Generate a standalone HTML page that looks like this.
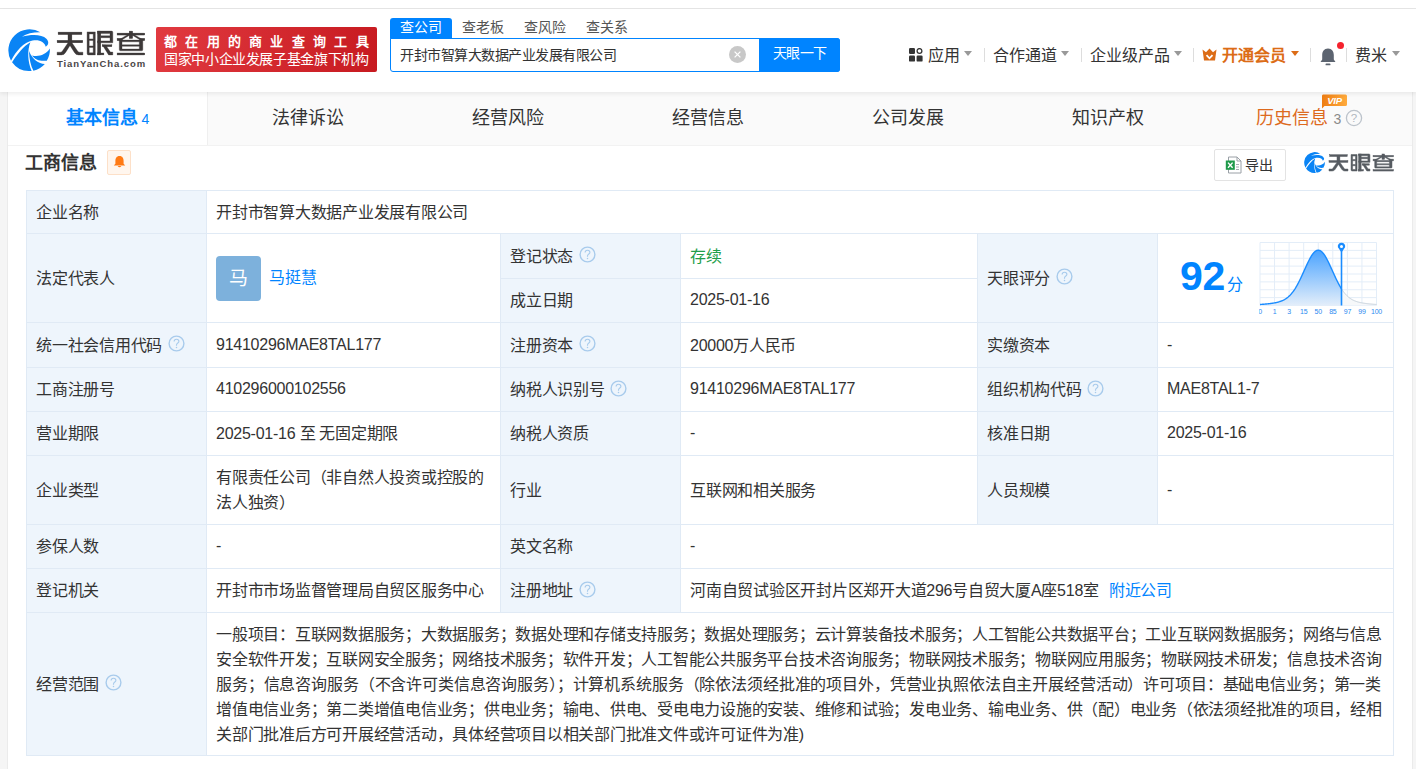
<!DOCTYPE html>
<html lang="zh-CN"><head><meta charset="utf-8">
<style>
*{box-sizing:border-box;margin:0;padding:0}
html,body{width:1416px;height:769px;overflow:hidden;background:#f5f5f5;font-family:"Liberation Sans",sans-serif;color:#333;position:relative}
.abs{position:absolute;white-space:nowrap}
#top{position:absolute;left:0;top:0;width:1416px;height:8px;background:#fff}
#topline{position:absolute;left:0;top:8px;width:1416px;height:1px;background:#e6e6e6}
#header{position:absolute;left:0;top:9px;width:1416px;height:83px;background:#fff;box-shadow:0 2px 4px rgba(0,0,0,.07);z-index:5}
#hdr{position:absolute;left:0;top:9px;width:1416px;height:83px;z-index:6}
#card{position:absolute;left:8px;top:92px;width:1404px;height:677px;background:#fff}
.nav{top:37px;font-size:16px;line-height:20px;color:#333}
.caret{top:42px;width:0;height:0;border-left:4.5px solid transparent;border-right:4.5px solid transparent;border-top:5px solid #999}
.sep{top:39px;width:1px;height:14px;background:#ddd}
.tabs{position:absolute;left:8px;top:92px;width:1404px;height:54px;background:#fafafa;border-bottom:1px solid #f2f2f2}
.tab{position:absolute;top:0;height:53px;line-height:52px;font-size:18px;color:#333;text-align:center;width:200px}
.tab.active{background:#fff;color:#0084ff;font-weight:bold}
.cell{position:absolute;border:1px solid #e0eaf5;font-size:16px;color:#333;display:flex;align-items:center;padding-left:9px;padding-bottom:3px}
.lab{background:#eef5fc}
.q{display:inline-block;width:16px;height:16px;border:1.2px solid #a9c5e3;border-radius:50%;color:#9dbbdc;font-size:11px;font-weight:bold;line-height:14px;letter-spacing:0;text-align:center;margin-left:6px;vertical-align:middle}
.cell{font-size:16px;letter-spacing:-0.25px}
.link{color:#0084ff;margin-left:10px}
.wrap{line-height:25px;white-space:normal;position:relative;top:1.5px}
.scope{line-height:25px;width:1165px;position:relative;top:1.5px}
.sl{text-align:justify;text-align-last:justify;white-space:nowrap}
.sl.last{text-align-last:left}
.qi{margin-left:5.5px;flex:none;position:relative;top:0}
.cell.lat{padding-bottom:1px}
</style></head><body>
<div id="top"></div><div id="topline"></div>
<div id="header"></div>
<div id="card"></div><div style="position:absolute;left:7px;top:92px;width:1px;height:677px;background:#ebebeb"></div><div style="position:absolute;left:1412px;top:92px;width:1px;height:677px;background:#ebebeb"></div>

<div id="hdr">
  <svg class="abs" style="left:4px;top:16px" width="50" height="50" viewBox="0 0 769 769">
    <g fill="#0a84f5"><path d="M108,548 A325,325 0 0 1 560,112 C450,110 350,132 275,180 C420,140 585,140 652,212 C692,255 690,302 642,334 C622,262 545,222 440,240 C300,265 190,400 108,548 Z"/>
<path d="M124,572 C212,440 300,325 406,264 C358,385 362,560 425,706 A325,325 0 0 1 124,572 Z"/>
<path d="M384,398 C388,522 412,625 452,703 A325,325 0 0 0 628,598 C530,590 445,540 384,398 Z"/>
<path d="M432,468 C525,492 645,462 706,362 A325,325 0 0 1 658,548 C560,562 472,532 432,468 Z"/></g>
  </svg>
  <svg class="abs" style="left:0;top:-9px" width="150" height="60" viewBox="0 0 150 60"><g fill="#3c3838" stroke="#3c3838" stroke-width="0.35">
<rect x="58.1" y="32.1" width="23.8" height="2.5"/>
<rect x="57.1" y="40.3" width="25.7" height="2.5"/>
<rect x="68" y="34" width="3.9" height="7"/>
<path d="M68.2,42.5 L71.9,42.5 L65.6,52.4 Q64.2,54.9 61.5,54.9 L57.1,54.9 L57.1,52.2 L60.5,52.2 Q61.6,52.2 62.4,51 Z"/>
<path d="M71.8,42.5 L68.1,42.5 L74.4,52.4 Q75.8,54.9 78.5,54.9 L82.9,54.9 L82.9,52.2 L79.5,52.2 Q78.4,52.2 77.6,51 Z"/>
<path fill-rule="evenodd" d="M87.1,31.9 H95.3 V54.9 H88.6 Q87.1,54.9 87.1,53.4 Z M89.2,34 V38.9 H93.2 V34 Z M89.2,40.5 V45.9 H93.2 V40.5 Z M89.2,47.5 V52.8 H93.2 V47.5 Z"/>
<rect x="97.5" y="31.1" width="3.3" height="23.8"/>
<path d="M97.5,31.1 H111.5 Q112.8,31.1 112.8,32.4 V42.8 H97.5 V40.9 H110 V37.7 H100.8 V35.8 H110 V33.6 H97.5 Z"/>
<rect x="102.3" y="44.8" width="9.6" height="1.9"/>
<path d="M102.4,45 L105.6,45 L110.4,52.1 L112.8,52.1 L112.8,54.9 L108.6,54.9 Z"/>
<rect x="97.5" y="53" width="6.4" height="1.9"/>
<rect x="117.1" y="33.1" width="27.7" height="1.95"/>
<rect x="129.2" y="31.1" width="3.5" height="7.4"/>
<path d="M129.6,33.6 L132.3,33.6 L122.6,39.4 L119.6,39.4 Z"/>
<path d="M129.6,33.6 L132.3,33.6 L142.3,39.4 L139.3,39.4 Z"/>
<rect x="117.1" y="38.3" width="5.2" height="2.4"/>
<rect x="139.6" y="38.3" width="5.2" height="2.4"/>
<path fill-rule="evenodd" d="M119.3,40.1 H142.8 V49.6 Q142.8,50.8 141.6,50.8 H120.5 Q119.3,50.8 119.3,49.6 Z M122,41.8 V44.8 H139.3 V41.8 Z M122,46.3 V49.1 H139.3 V46.3 Z"/>
<rect x="117.1" y="53" width="27.7" height="1.95"/>
</g></svg>
  <div class="abs" style="left:57px;top:49px;font-size:9.5px;font-weight:bold;color:#4a4646;letter-spacing:0.9px;line-height:12px">TianYanCha.com</div>
  <div class="abs" style="left:156px;top:18px;width:221px;height:45px;border-radius:2px;background:linear-gradient(100deg,#e13a40,#c71a20)">
    <div class="abs" style="left:8px;top:6.5px;font-size:13px;font-weight:bold;color:#fff;letter-spacing:8.3px;line-height:16px;white-space:nowrap">都在用的商业查询工具</div>
    <div class="abs" style="left:8px;top:23.5px;font-size:14px;letter-spacing:-0.36px;color:#fff;line-height:16px;white-space:nowrap;font-weight:500">国家中小企业发展子基金旗下机构</div>
  </div>
  <div class="abs" style="left:390px;top:9px;width:62px;height:21px;background:#0084ff;border-radius:3px 3px 0 0;color:#fff;font-size:14px;line-height:19px;text-align:center">查公司</div>
  <div class="abs" style="left:462px;top:9px;font-size:14px;line-height:19px;color:#555">查老板</div>
  <div class="abs" style="left:524px;top:9px;font-size:14px;line-height:19px;color:#555">查风险</div>
  <div class="abs" style="left:586px;top:9px;font-size:14px;line-height:19px;color:#555">查关系</div>
  <div class="abs" style="left:390px;top:29px;width:450px;height:34px;border:1.5px solid #0084ff;border-radius:0 3px 3px 3px;background:#fff"></div>
  <div class="abs" style="left:400px;top:36px;font-size:14px;letter-spacing:-0.5px;line-height:20px;color:#333">开封市智算大数据产业发展有限公司</div>
  <div class="abs" style="left:729px;top:37px;width:17px;height:17px;border-radius:50%;background:#c8c8c8">
    <svg class="abs" style="left:0;top:0" width="17" height="17"><path d="M5.6 5.6L11.4 11.4M11.4 5.6L5.6 11.4" stroke="#fff" stroke-width="1.3"/></svg>
  </div>
  <div class="abs" style="left:759px;top:29px;width:81px;height:34px;background:#0084ff;border-radius:0 3px 3px 0;color:#fff;font-size:14px;letter-spacing:-0.5px;line-height:30px;text-align:center">天眼一下</div>

  <!-- right nav -->
  <svg class="abs" style="left:909px;top:39px" width="14" height="14" viewBox="0 0 14 14">
    <rect x="0" y="0" width="6" height="6" rx="1.2" fill="#333"/>
    <circle cx="10.5" cy="3" r="2.4" fill="none" stroke="#333" stroke-width="1.3"/>
    <rect x="0" y="7.6" width="6" height="6" rx="1.2" fill="#333"/>
    <rect x="7.6" y="7.6" width="6" height="6" rx="1.2" fill="#333"/>
  </svg>
  <div class="abs nav" style="left:928px">应用</div>
  <div class="abs caret" style="left:964px"></div>
  <div class="abs sep" style="left:984px"></div>
  <div class="abs nav" style="left:993px">合作通道</div>
  <div class="abs caret" style="left:1061px"></div>
  <div class="abs sep" style="left:1081px"></div>
  <div class="abs nav" style="left:1090px">企业级产品</div>
  <div class="abs caret" style="left:1174px"></div>
  <div class="abs sep" style="left:1193px"></div>
  <svg class="abs" style="left:1202px;top:39px" width="15" height="13" viewBox="0 0 15 13">
    <path d="M0.5 1.5 L4 4.2 L7.5 0.5 L11 4.2 L14.5 1.5 L13 12.5 L2 12.5 Z" fill="#dc6c16"/>
    <path d="M4.5 7.2 L7.5 10.3 L10.5 7.2" fill="none" stroke="#fff" stroke-width="1.8"/>
  </svg>
  <div class="abs nav" style="left:1222px;color:#dc6c16;font-weight:bold">开通会员</div>
  <div class="abs caret" style="left:1291px;border-top-color:#dc6c16"></div>
  <div class="abs sep" style="left:1310px"></div>
  <svg class="abs" style="left:1319px;top:38px" width="18" height="20" viewBox="0 0 18 20">
    <path d="M9 1.5 C5 1.5 3.2 4.5 3.2 8 L3.2 12.5 L1.5 15 L16.5 15 L14.8 12.5 L14.8 8 C14.8 4.5 13 1.5 9 1.5Z" fill="#5c6470"/>
    <rect x="6.5" y="16.5" width="5" height="1.8" rx="0.9" fill="#5c6470"/>
  </svg>
  <div class="abs" style="left:1337px;top:33px;width:7px;height:7px;border-radius:50%;background:#f5222d"></div>
  <div class="abs sep" style="left:1346px"></div>
  <div class="abs nav" style="left:1355px">费米</div>
  <div class="abs caret" style="left:1392px"></div>
</div>
<div class="tabs">
  <div class="tab active" style="left:0;width:199px">基本信息<span style="font-weight:normal;font-size:14px"> 4</span></div>
  <div class="tab" style="left:199px;width:201px;border-left:1px solid #efefef">法律诉讼</div>
  <div class="tab" style="left:400px">经营风险</div>
  <div class="tab" style="left:600px">经营信息</div>
  <div class="tab" style="left:800px">公司发展</div>
  <div class="tab" style="left:1000px">知识产权</div>
  <div class="tab" style="left:1200px;color:#dd6a1e;text-align:left;padding-left:48px">历史信息<span style="font-size:14px;color:#8a8a8a;margin-left:5.5px">3</span></div>
  <svg class="abs" style="left:1337px;top:17px" width="18" height="18" viewBox="0 0 18 18"><circle cx="9" cy="9" r="7.6" fill="none" stroke="#bcc3cb" stroke-width="1.3"/><text x="9" y="13" font-size="11.5" fill="#b0b7bf" text-anchor="middle" font-family="Liberation Sans">?</text></svg>
  <svg class="abs" style="left:1313px;top:2px" width="27" height="15" viewBox="0 0 27 15"><defs><linearGradient id="vipg" x1="0" y1="0" x2="1" y2="0"><stop offset="0" stop-color="#ee7d12"/><stop offset="1" stop-color="#ffab3d"/></linearGradient></defs><path d="M2 0.5 H24.5 Q26 0.5 26 2 V10.5 Q26 12 24.5 12 H3.5 L1 14.5 L1 2 Q1 0.5 2 0.5Z" fill="url(#vipg)"/><text x="13.5" y="10" font-size="9.5" font-weight="bold" font-style="italic" fill="#fff" text-anchor="middle" font-family="Liberation Sans" letter-spacing="-0.3">VIP</text></svg>
</div>
<div class="abs" style="left:25px;top:151px;font-size:18px;letter-spacing:0px;font-weight:bold;line-height:24px;color:#333">工商信息</div>
<div class="abs" style="left:107px;top:150px;width:24px;height:25px;border:1px solid #fde0c8;border-radius:2px;background:#fff6ee">
  <svg class="abs" style="left:5px;top:4px" width="13" height="14" viewBox="0 0 13 14"><path d="M6.5 1 C3.6 1 2.4 3.2 2.4 6 L2.4 8.8 L0.8 10.6 L12.2 10.6 L10.6 8.8 L10.6 6 C10.6 3.2 9.4 1 6.5 1Z" fill="#ff7a14"/><path d="M4.6 11 Q6.5 13.6 8.4 11Z" fill="#ff7a14"/></svg>
</div>
<div class="abs" style="left:1214px;top:149px;width:72px;height:32px;border:1px solid #e3e3e3;border-radius:2px;background:#fff"></div>
<svg class="abs" style="left:1225px;top:156px" width="18" height="18" viewBox="0 0 18 18">
  <path d="M3.5 1 L12 1 L16 5 L16 17 L3.5 17 Z" fill="#fff" stroke="#9aa0a6" stroke-width="1"/>
  <path d="M12 1 L12 5 L16 5" fill="none" stroke="#9aa0a6" stroke-width="1"/>
  <path d="M11 8.5 L14 8.5 M11 11 L14 11 M11 13.5 L14 13.5" stroke="#9aa0a6" stroke-width="0.9"/>
  <rect x="0.8" y="4.5" width="9" height="9.3" fill="#1e9a4a"/>
  <path d="M3 6.6 L7.6 11.8 M7.6 6.6 L3 11.8" stroke="#fff" stroke-width="1.4"/>
</svg>
<div class="abs" style="left:1245px;top:155px;font-size:14px;line-height:20px;color:#333">导出</div>
<svg class="abs" style="left:1302px;top:150px" width="25" height="25" viewBox="0 0 769 769"><g fill="#0a84f5"><path d="M108,548 A325,325 0 0 1 560,112 C450,110 350,132 275,180 C420,140 585,140 652,212 C692,255 690,302 642,334 C622,262 545,222 440,240 C300,265 190,400 108,548 Z"/>
<path d="M124,572 C212,440 300,325 406,264 C358,385 362,560 425,706 A325,325 0 0 1 124,572 Z"/>
<path d="M384,398 C388,522 412,625 452,703 A325,325 0 0 0 628,598 C530,590 445,540 384,398 Z"/>
<path d="M432,468 C525,492 645,462 706,362 A325,325 0 0 1 658,548 C560,562 472,532 432,468 Z"/></g></svg><svg class="abs" style="left:0;top:0" width="1416" height="200" viewBox="0 0 1416 200"><g transform="translate(1329,154) scale(0.735,0.714) translate(-57.1,-31.1)"><g fill="#565b61" stroke="#565b61" stroke-width="0.7">
<rect x="58.1" y="32.1" width="23.8" height="2.5"/>
<rect x="57.1" y="40.3" width="25.7" height="2.5"/>
<rect x="68" y="34" width="3.9" height="7"/>
<path d="M68.2,42.5 L71.9,42.5 L65.6,52.4 Q64.2,54.9 61.5,54.9 L57.1,54.9 L57.1,52.2 L60.5,52.2 Q61.6,52.2 62.4,51 Z"/>
<path d="M71.8,42.5 L68.1,42.5 L74.4,52.4 Q75.8,54.9 78.5,54.9 L82.9,54.9 L82.9,52.2 L79.5,52.2 Q78.4,52.2 77.6,51 Z"/>
<path fill-rule="evenodd" d="M87.1,31.9 H95.3 V54.9 H88.6 Q87.1,54.9 87.1,53.4 Z M89.2,34 V38.9 H93.2 V34 Z M89.2,40.5 V45.9 H93.2 V40.5 Z M89.2,47.5 V52.8 H93.2 V47.5 Z"/>
<rect x="97.5" y="31.1" width="3.3" height="23.8"/>
<path d="M97.5,31.1 H111.5 Q112.8,31.1 112.8,32.4 V42.8 H97.5 V40.9 H110 V37.7 H100.8 V35.8 H110 V33.6 H97.5 Z"/>
<rect x="102.3" y="44.8" width="9.6" height="1.9"/>
<path d="M102.4,45 L105.6,45 L110.4,52.1 L112.8,52.1 L112.8,54.9 L108.6,54.9 Z"/>
<rect x="97.5" y="53" width="6.4" height="1.9"/>
<rect x="117.1" y="33.1" width="27.7" height="1.95"/>
<rect x="129.2" y="31.1" width="3.5" height="7.4"/>
<path d="M129.6,33.6 L132.3,33.6 L122.6,39.4 L119.6,39.4 Z"/>
<path d="M129.6,33.6 L132.3,33.6 L142.3,39.4 L139.3,39.4 Z"/>
<rect x="117.1" y="38.3" width="5.2" height="2.4"/>
<rect x="139.6" y="38.3" width="5.2" height="2.4"/>
<path fill-rule="evenodd" d="M119.3,40.1 H142.8 V49.6 Q142.8,50.8 141.6,50.8 H120.5 Q119.3,50.8 119.3,49.6 Z M122,41.8 V44.8 H139.3 V41.8 Z M122,46.3 V49.1 H139.3 V46.3 Z"/>
<rect x="117.1" y="53" width="27.7" height="1.95"/>
</g></g></svg>

<!-- table -->
<div id="tbl"><div class="cell lab" style="left:26px;top:190px;width:181px;height:44px">企业名称</div>
<div class="cell" style="left:206px;top:190px;width:1188px;height:44px">开封市智算大数据产业发展有限公司</div>
<div class="cell lab" style="left:26px;top:233px;width:181px;height:90px">法定代表人</div>
<div class="cell" style="left:206px;top:233px;width:295px;height:90px"><div style="width:45px;height:45px;border-radius:4px;background:#7db1dc;color:#fff;font-size:19px;line-height:45px;text-align:center;position:relative;top:2px">马</div><span style="color:#0084ff;margin-left:8px;position:relative;top:-0.5px">马挺慧</span></div>
<div class="cell lab" style="left:500px;top:233px;width:181px;height:46px">登记状态<svg class="qi" width="17" height="17" viewBox="0 0 17 17"><circle cx="8.5" cy="8.5" r="7.4" fill="none" stroke="#a8cbec" stroke-width="1.4"/><path d="M6.1 6.6 C6.1 5.1 7.1 4.2 8.5 4.2 C9.9 4.2 10.9 5.1 10.9 6.4 C10.9 7.9 8.5 8.1 8.5 9.9 L8.5 10.8" fill="none" stroke="#a8cbec" stroke-width="1.1"/><circle cx="8.5" cy="12.6" r="0.75" fill="#a8cbec"/></svg></div>
<div class="cell" style="left:680px;top:233px;width:298px;height:46px"><span style="color:#1f9e4a">存续</span></div>
<div class="cell lab" style="left:500px;top:278px;width:181px;height:45px">成立日期</div>
<div class="cell lat" style="left:680px;top:278px;width:298px;height:45px">2025-01-16</div>
<div class="cell lab" style="left:977px;top:233px;width:181px;height:90px">天眼评分<svg class="qi" width="17" height="17" viewBox="0 0 17 17"><circle cx="8.5" cy="8.5" r="7.4" fill="none" stroke="#a8cbec" stroke-width="1.4"/><path d="M6.1 6.6 C6.1 5.1 7.1 4.2 8.5 4.2 C9.9 4.2 10.9 5.1 10.9 6.4 C10.9 7.9 8.5 8.1 8.5 9.9 L8.5 10.8" fill="none" stroke="#a8cbec" stroke-width="1.1"/><circle cx="8.5" cy="12.6" r="0.75" fill="#a8cbec"/></svg></div>
<div class="cell" style="left:1157px;top:233px;width:237px;height:90px"><div class="abs" style="left:22px;top:19px;font-size:41px;font-weight:bold;color:#0084ff;line-height:46px;font-family:'Liberation Sans',sans-serif">92</div>
<div class="abs" style="left:69px;top:40.5px;font-size:16px;color:#0084ff;line-height:20px">分</div>
<svg class="abs" style="left:101px;top:8px" width="128" height="80" viewBox="0 0 128 80"><line x1="1.00" y1="0.5" x2="1.00" y2="63.5" stroke="#e3edf8" stroke-width="1"/><line x1="1.0" y1="0.50" x2="117.5" y2="0.50" stroke="#e3edf8" stroke-width="1"/><line x1="15.56" y1="0.5" x2="15.56" y2="63.5" stroke="#e3edf8" stroke-width="1"/><line x1="1.0" y1="8.38" x2="117.5" y2="8.38" stroke="#e3edf8" stroke-width="1"/><line x1="30.12" y1="0.5" x2="30.12" y2="63.5" stroke="#e3edf8" stroke-width="1"/><line x1="1.0" y1="16.25" x2="117.5" y2="16.25" stroke="#e3edf8" stroke-width="1"/><line x1="44.69" y1="0.5" x2="44.69" y2="63.5" stroke="#e3edf8" stroke-width="1"/><line x1="1.0" y1="24.12" x2="117.5" y2="24.12" stroke="#e3edf8" stroke-width="1"/><line x1="59.25" y1="0.5" x2="59.25" y2="63.5" stroke="#e3edf8" stroke-width="1"/><line x1="1.0" y1="32.00" x2="117.5" y2="32.00" stroke="#e3edf8" stroke-width="1"/><line x1="73.81" y1="0.5" x2="73.81" y2="63.5" stroke="#e3edf8" stroke-width="1"/><line x1="1.0" y1="39.88" x2="117.5" y2="39.88" stroke="#e3edf8" stroke-width="1"/><line x1="88.38" y1="0.5" x2="88.38" y2="63.5" stroke="#e3edf8" stroke-width="1"/><line x1="1.0" y1="47.75" x2="117.5" y2="47.75" stroke="#e3edf8" stroke-width="1"/><line x1="102.94" y1="0.5" x2="102.94" y2="63.5" stroke="#e3edf8" stroke-width="1"/><line x1="1.0" y1="55.62" x2="117.5" y2="55.62" stroke="#e3edf8" stroke-width="1"/><line x1="117.50" y1="0.5" x2="117.50" y2="63.5" stroke="#e3edf8" stroke-width="1"/><line x1="1.0" y1="63.50" x2="117.5" y2="63.50" stroke="#e3edf8" stroke-width="1"/><defs><linearGradient id="bg" x1="0" y1="0" x2="0" y2="1"><stop offset="0" stop-color="#4aa3ff"/><stop offset="1" stop-color="#e3eefa"/></linearGradient></defs><path d="M1.00,62.49 L1.50,62.45 L2.00,62.42 L2.49,62.38 L2.99,62.34 L3.49,62.31 L3.99,62.27 L4.49,62.23 L4.98,62.19 L5.48,62.14 L5.98,62.10 L6.48,62.06 L6.97,62.01 L7.47,61.96 L7.97,61.91 L8.47,61.86 L8.97,61.81 L9.46,61.75 L9.96,61.70 L10.46,61.64 L10.96,61.58 L11.46,61.51 L11.95,61.45 L12.45,61.38 L12.95,61.31 L13.45,61.23 L13.94,61.16 L14.44,61.07 L14.94,60.99 L15.44,60.90 L15.94,60.81 L16.43,60.71 L16.93,60.60 L17.43,60.50 L17.93,60.38 L18.43,60.26 L18.92,60.13 L19.42,60.00 L19.92,59.85 L20.42,59.70 L20.91,59.54 L21.41,59.37 L21.91,59.19 L22.41,59.00 L22.91,58.80 L23.40,58.58 L23.90,58.36 L24.40,58.11 L24.90,57.86 L25.40,57.59 L25.89,57.30 L26.39,57.00 L26.89,56.68 L27.39,56.34 L27.88,55.98 L28.38,55.60 L28.88,55.20 L29.38,54.78 L29.88,54.34 L30.37,53.87 L30.87,53.38 L31.37,52.87 L31.87,52.33 L32.37,51.76 L32.86,51.17 L33.36,50.55 L33.86,49.91 L34.36,49.23 L34.85,48.53 L35.35,47.80 L35.85,47.05 L36.35,46.26 L36.85,45.45 L37.34,44.61 L37.84,43.75 L38.34,42.85 L38.84,41.94 L39.34,41.00 L39.83,40.03 L40.33,39.05 L40.83,38.04 L41.33,37.01 L41.82,35.97 L42.32,34.91 L42.82,33.83 L43.32,32.75 L43.82,31.65 L44.31,30.55 L44.81,29.44 L45.31,28.33 L45.81,27.22 L46.31,26.11 L46.80,25.01 L47.30,23.92 L47.80,22.84 L48.30,21.78 L48.79,20.73 L49.29,19.71 L49.79,18.71 L50.29,17.74 L50.79,16.80 L51.28,15.90 L51.78,15.03 L52.28,14.20 L52.78,13.42 L53.28,12.68 L53.77,11.99 L54.27,11.36 L54.77,10.77 L55.27,10.24 L55.76,9.77 L56.26,9.36 L56.76,9.01 L57.26,8.72 L57.76,8.49 L58.25,8.33 L58.75,8.23 L59.25,8.20 L59.75,8.23 L60.25,8.33 L60.74,8.49 L61.24,8.72 L61.74,9.01 L62.24,9.36 L62.74,9.77 L63.23,10.24 L63.73,10.77 L64.23,11.36 L64.73,11.99 L65.22,12.68 L65.72,13.42 L66.22,14.20 L66.72,15.03 L67.22,15.90 L67.71,16.80 L68.21,17.74 L68.71,18.71 L69.21,19.71 L69.71,20.73 L70.20,21.78 L70.70,22.84 L71.20,23.92 L71.70,25.01 L72.19,26.11 L72.69,27.22 L73.19,28.33 L73.69,29.44 L74.19,30.55 L74.68,31.65 L75.18,32.75 L75.68,33.83 L76.18,34.91 L76.68,35.97 L77.17,37.01 L77.67,38.04 L78.17,39.05 L78.67,40.03 L79.16,41.00 L79.66,41.94 L80.16,42.85 L80.66,43.75 L81.16,44.61 L81.65,45.45 L82.15,46.26 L82.50,46.81 L82.5,63.5 L1.0,63.5 Z" fill="url(#bg)"/><path d="M82.50,46.81 L82.65,47.05 L83.15,47.80 L83.65,48.53 L84.14,49.23 L84.64,49.91 L85.14,50.55 L85.64,51.17 L86.13,51.76 L86.63,52.33 L87.13,52.87 L87.63,53.38 L88.13,53.87 L88.62,54.34 L89.12,54.78 L89.62,55.20 L90.12,55.60 L90.62,55.98 L91.11,56.34 L91.61,56.68 L92.11,57.00 L92.61,57.30 L93.10,57.59 L93.60,57.86 L94.10,58.11 L94.60,58.36 L95.10,58.58 L95.59,58.80 L96.09,59.00 L96.59,59.19 L97.09,59.37 L97.59,59.54 L98.08,59.70 L98.58,59.85 L99.08,60.00 L99.58,60.13 L100.07,60.26 L100.57,60.38 L101.07,60.50 L101.57,60.60 L102.07,60.71 L102.56,60.81 L103.06,60.90 L103.56,60.99 L104.06,61.07 L104.56,61.16 L105.05,61.23 L105.55,61.31 L106.05,61.38 L106.55,61.45 L107.04,61.51 L107.54,61.58 L108.04,61.64 L108.54,61.70 L109.04,61.75 L109.53,61.81 L110.03,61.86 L110.53,61.91 L111.03,61.96 L111.53,62.01 L112.02,62.06 L112.52,62.10 L113.02,62.14 L113.52,62.19 L114.01,62.23 L114.51,62.27 L115.01,62.31 L115.51,62.34 L116.01,62.38 L116.50,62.42 L117.00,62.45 L117.50,62.49 L117.5,63.5 L82.5,63.5 Z" fill="#f6f8fa"/><path d="M82.50,46.81 L82.65,47.05 L83.15,47.80 L83.65,48.53 L84.14,49.23 L84.64,49.91 L85.14,50.55 L85.64,51.17 L86.13,51.76 L86.63,52.33 L87.13,52.87 L87.63,53.38 L88.13,53.87 L88.62,54.34 L89.12,54.78 L89.62,55.20 L90.12,55.60 L90.62,55.98 L91.11,56.34 L91.61,56.68 L92.11,57.00 L92.61,57.30 L93.10,57.59 L93.60,57.86 L94.10,58.11 L94.60,58.36 L95.10,58.58 L95.59,58.80 L96.09,59.00 L96.59,59.19 L97.09,59.37 L97.59,59.54 L98.08,59.70 L98.58,59.85 L99.08,60.00 L99.58,60.13 L100.07,60.26 L100.57,60.38 L101.07,60.50 L101.57,60.60 L102.07,60.71 L102.56,60.81 L103.06,60.90 L103.56,60.99 L104.06,61.07 L104.56,61.16 L105.05,61.23 L105.55,61.31 L106.05,61.38 L106.55,61.45 L107.04,61.51 L107.54,61.58 L108.04,61.64 L108.54,61.70 L109.04,61.75 L109.53,61.81 L110.03,61.86 L110.53,61.91 L111.03,61.96 L111.53,62.01 L112.02,62.06 L112.52,62.10 L113.02,62.14 L113.52,62.19 L114.01,62.23 L114.51,62.27 L115.01,62.31 L115.51,62.34 L116.01,62.38 L116.50,62.42 L117.00,62.45 L117.50,62.49" fill="none" stroke="#c5d0db" stroke-width="1"/><path d="M1.00,62.49 L1.50,62.45 L2.00,62.42 L2.49,62.38 L2.99,62.34 L3.49,62.31 L3.99,62.27 L4.49,62.23 L4.98,62.19 L5.48,62.14 L5.98,62.10 L6.48,62.06 L6.97,62.01 L7.47,61.96 L7.97,61.91 L8.47,61.86 L8.97,61.81 L9.46,61.75 L9.96,61.70 L10.46,61.64 L10.96,61.58 L11.46,61.51 L11.95,61.45 L12.45,61.38 L12.95,61.31 L13.45,61.23 L13.94,61.16 L14.44,61.07 L14.94,60.99 L15.44,60.90 L15.94,60.81 L16.43,60.71 L16.93,60.60 L17.43,60.50 L17.93,60.38 L18.43,60.26 L18.92,60.13 L19.42,60.00 L19.92,59.85 L20.42,59.70 L20.91,59.54 L21.41,59.37 L21.91,59.19 L22.41,59.00 L22.91,58.80 L23.40,58.58 L23.90,58.36 L24.40,58.11 L24.90,57.86 L25.40,57.59 L25.89,57.30 L26.39,57.00 L26.89,56.68 L27.39,56.34 L27.88,55.98 L28.38,55.60 L28.88,55.20 L29.38,54.78 L29.88,54.34 L30.37,53.87 L30.87,53.38 L31.37,52.87 L31.87,52.33 L32.37,51.76 L32.86,51.17 L33.36,50.55 L33.86,49.91 L34.36,49.23 L34.85,48.53 L35.35,47.80 L35.85,47.05 L36.35,46.26 L36.85,45.45 L37.34,44.61 L37.84,43.75 L38.34,42.85 L38.84,41.94 L39.34,41.00 L39.83,40.03 L40.33,39.05 L40.83,38.04 L41.33,37.01 L41.82,35.97 L42.32,34.91 L42.82,33.83 L43.32,32.75 L43.82,31.65 L44.31,30.55 L44.81,29.44 L45.31,28.33 L45.81,27.22 L46.31,26.11 L46.80,25.01 L47.30,23.92 L47.80,22.84 L48.30,21.78 L48.79,20.73 L49.29,19.71 L49.79,18.71 L50.29,17.74 L50.79,16.80 L51.28,15.90 L51.78,15.03 L52.28,14.20 L52.78,13.42 L53.28,12.68 L53.77,11.99 L54.27,11.36 L54.77,10.77 L55.27,10.24 L55.76,9.77 L56.26,9.36 L56.76,9.01 L57.26,8.72 L57.76,8.49 L58.25,8.33 L58.75,8.23 L59.25,8.20 L59.75,8.23 L60.25,8.33 L60.74,8.49 L61.24,8.72 L61.74,9.01 L62.24,9.36 L62.74,9.77 L63.23,10.24 L63.73,10.77 L64.23,11.36 L64.73,11.99 L65.22,12.68 L65.72,13.42 L66.22,14.20 L66.72,15.03 L67.22,15.90 L67.71,16.80 L68.21,17.74 L68.71,18.71 L69.21,19.71 L69.71,20.73 L70.20,21.78 L70.70,22.84 L71.20,23.92 L71.70,25.01 L72.19,26.11 L72.69,27.22 L73.19,28.33 L73.69,29.44 L74.19,30.55 L74.68,31.65 L75.18,32.75 L75.68,33.83 L76.18,34.91 L76.68,35.97 L77.17,37.01 L77.67,38.04 L78.17,39.05 L78.67,40.03 L79.16,41.00 L79.66,41.94 L80.16,42.85 L80.66,43.75 L81.16,44.61 L81.65,45.45 L82.15,46.26 L82.50,46.81" fill="none" stroke="#1a8cff" stroke-width="1.4"/><line x1="82.5" y1="6" x2="82.5" y2="63.5" stroke="#1a8cff" stroke-width="1.6"/><path d="M78.9,5.2 A3.7,3.7 0 1 1 86.1,5.2 L82.5,10.5 Z" fill="#1a8cff"/><circle cx="82.5" cy="4.5" r="1.5" fill="#fff"/><text x="1.0" y="72" font-size="7" fill="#2b8af0" text-anchor="middle" font-family="Liberation Sans">0</text><text x="15.6" y="72" font-size="7" fill="#2b8af0" text-anchor="middle" font-family="Liberation Sans">1</text><text x="30.1" y="72" font-size="7" fill="#2b8af0" text-anchor="middle" font-family="Liberation Sans">3</text><text x="44.7" y="72" font-size="7" fill="#2b8af0" text-anchor="middle" font-family="Liberation Sans">15</text><text x="59.2" y="72" font-size="7" fill="#2b8af0" text-anchor="middle" font-family="Liberation Sans">50</text><text x="73.8" y="72" font-size="7" fill="#2b8af0" text-anchor="middle" font-family="Liberation Sans">85</text><text x="88.4" y="72" font-size="7" fill="#2b8af0" text-anchor="middle" font-family="Liberation Sans">97</text><text x="102.9" y="72" font-size="7" fill="#2b8af0" text-anchor="middle" font-family="Liberation Sans">99</text><text x="117.5" y="72" font-size="7" fill="#2b8af0" text-anchor="middle" font-family="Liberation Sans">100</text></svg></div>
<div class="cell lab" style="left:26px;top:322px;width:181px;height:46px">统一社会信用代码<svg class="qi" width="17" height="17" viewBox="0 0 17 17"><circle cx="8.5" cy="8.5" r="7.4" fill="none" stroke="#a8cbec" stroke-width="1.4"/><path d="M6.1 6.6 C6.1 5.1 7.1 4.2 8.5 4.2 C9.9 4.2 10.9 5.1 10.9 6.4 C10.9 7.9 8.5 8.1 8.5 9.9 L8.5 10.8" fill="none" stroke="#a8cbec" stroke-width="1.1"/><circle cx="8.5" cy="12.6" r="0.75" fill="#a8cbec"/></svg></div>
<div class="cell lat" style="left:206px;top:322px;width:295px;height:46px">91410296MAE8TAL177</div>
<div class="cell lab" style="left:500px;top:322px;width:181px;height:46px">注册资本<svg class="qi" width="17" height="17" viewBox="0 0 17 17"><circle cx="8.5" cy="8.5" r="7.4" fill="none" stroke="#a8cbec" stroke-width="1.4"/><path d="M6.1 6.6 C6.1 5.1 7.1 4.2 8.5 4.2 C9.9 4.2 10.9 5.1 10.9 6.4 C10.9 7.9 8.5 8.1 8.5 9.9 L8.5 10.8" fill="none" stroke="#a8cbec" stroke-width="1.1"/><circle cx="8.5" cy="12.6" r="0.75" fill="#a8cbec"/></svg></div>
<div class="cell" style="left:680px;top:322px;width:298px;height:46px">20000万人民币</div>
<div class="cell lab" style="left:977px;top:322px;width:181px;height:46px">实缴资本</div>
<div class="cell lat" style="left:1157px;top:322px;width:237px;height:46px">-</div>
<div class="cell lab" style="left:26px;top:367px;width:181px;height:45px">工商注册号</div>
<div class="cell lat" style="left:206px;top:367px;width:295px;height:45px">410296000102556</div>
<div class="cell lab" style="left:500px;top:367px;width:181px;height:45px">纳税人识别号<svg class="qi" width="17" height="17" viewBox="0 0 17 17"><circle cx="8.5" cy="8.5" r="7.4" fill="none" stroke="#a8cbec" stroke-width="1.4"/><path d="M6.1 6.6 C6.1 5.1 7.1 4.2 8.5 4.2 C9.9 4.2 10.9 5.1 10.9 6.4 C10.9 7.9 8.5 8.1 8.5 9.9 L8.5 10.8" fill="none" stroke="#a8cbec" stroke-width="1.1"/><circle cx="8.5" cy="12.6" r="0.75" fill="#a8cbec"/></svg></div>
<div class="cell lat" style="left:680px;top:367px;width:298px;height:45px">91410296MAE8TAL177</div>
<div class="cell lab" style="left:977px;top:367px;width:181px;height:45px">组织机构代码<svg class="qi" width="17" height="17" viewBox="0 0 17 17"><circle cx="8.5" cy="8.5" r="7.4" fill="none" stroke="#a8cbec" stroke-width="1.4"/><path d="M6.1 6.6 C6.1 5.1 7.1 4.2 8.5 4.2 C9.9 4.2 10.9 5.1 10.9 6.4 C10.9 7.9 8.5 8.1 8.5 9.9 L8.5 10.8" fill="none" stroke="#a8cbec" stroke-width="1.1"/><circle cx="8.5" cy="12.6" r="0.75" fill="#a8cbec"/></svg></div>
<div class="cell lat" style="left:1157px;top:367px;width:237px;height:45px">MAE8TAL1-7</div>
<div class="cell lab" style="left:26px;top:411px;width:181px;height:45px">营业期限</div>
<div class="cell" style="left:206px;top:411px;width:295px;height:45px">2025-01-16 至 无固定期限</div>
<div class="cell lab" style="left:500px;top:411px;width:181px;height:45px">纳税人资质</div>
<div class="cell lat" style="left:680px;top:411px;width:298px;height:45px">-</div>
<div class="cell lab" style="left:977px;top:411px;width:181px;height:45px">核准日期</div>
<div class="cell lat" style="left:1157px;top:411px;width:237px;height:45px">2025-01-16</div>
<div class="cell lab" style="left:26px;top:455px;width:181px;height:70px">企业类型</div>
<div class="cell" style="left:206px;top:455px;width:295px;height:70px"><div class="wrap">有限责任公司（非自然人投资或控股的<br>法人独资）</div></div>
<div class="cell lab" style="left:500px;top:455px;width:181px;height:70px">行业</div>
<div class="cell" style="left:680px;top:455px;width:298px;height:70px">互联网和相关服务</div>
<div class="cell lab" style="left:977px;top:455px;width:181px;height:70px">人员规模</div>
<div class="cell lat" style="left:1157px;top:455px;width:237px;height:70px">-</div>
<div class="cell lab" style="left:26px;top:524px;width:181px;height:45px">参保人数</div>
<div class="cell lat" style="left:206px;top:524px;width:295px;height:45px">-</div>
<div class="cell lab" style="left:500px;top:524px;width:181px;height:45px">英文名称</div>
<div class="cell lat" style="left:680px;top:524px;width:714px;height:45px">-</div>
<div class="cell lab" style="left:26px;top:568px;width:181px;height:45px">登记机关</div>
<div class="cell" style="left:206px;top:568px;width:295px;height:45px">开封市市场监督管理局自贸区服务中心</div>
<div class="cell lab" style="left:500px;top:568px;width:181px;height:45px">注册地址<svg class="qi" width="17" height="17" viewBox="0 0 17 17"><circle cx="8.5" cy="8.5" r="7.4" fill="none" stroke="#a8cbec" stroke-width="1.4"/><path d="M6.1 6.6 C6.1 5.1 7.1 4.2 8.5 4.2 C9.9 4.2 10.9 5.1 10.9 6.4 C10.9 7.9 8.5 8.1 8.5 9.9 L8.5 10.8" fill="none" stroke="#a8cbec" stroke-width="1.1"/><circle cx="8.5" cy="12.6" r="0.75" fill="#a8cbec"/></svg></div>
<div class="cell" style="left:680px;top:568px;width:714px;height:45px">河南自贸试验区开封片区郑开大道296号自贸大厦A座518室<span class="link">附近公司</span></div>
<div class="cell lab" style="left:26px;top:612px;width:181px;height:144px">经营范围<svg class="qi" width="17" height="17" viewBox="0 0 17 17"><circle cx="8.5" cy="8.5" r="7.4" fill="none" stroke="#a8cbec" stroke-width="1.4"/><path d="M6.1 6.6 C6.1 5.1 7.1 4.2 8.5 4.2 C9.9 4.2 10.9 5.1 10.9 6.4 C10.9 7.9 8.5 8.1 8.5 9.9 L8.5 10.8" fill="none" stroke="#a8cbec" stroke-width="1.1"/><circle cx="8.5" cy="12.6" r="0.75" fill="#a8cbec"/></svg></div>
<div class="cell" style="left:206px;top:612px;width:1188px;height:144px"><div class="scope"><div class="sl">一般项目：互联网数据服务；大数据服务；数据处理和存储支持服务；数据处理服务；云计算装备技术服务；人工智能公共数据平台；工业互联网数据服务；网络与信息</div><div class="sl">安全软件开发；互联网安全服务；网络技术服务；软件开发；人工智能公共服务平台技术咨询服务；物联网技术服务；物联网应用服务；物联网技术研发；信息技术咨询</div><div class="sl">服务；信息咨询服务（不含许可类信息咨询服务）；计算机系统服务（除依法须经批准的项目外，凭营业执照依法自主开展经营活动）许可项目：基础电信业务；第一类</div><div class="sl">增值电信业务；第二类增值电信业务；供电业务；输电、供电、受电电力设施的安装、维修和试验；发电业务、输电业务、供（配）电业务（依法须经批准的项目，经相</div><div class="sl last">关部门批准后方可开展经营活动，具体经营项目以相关部门批准文件或许可证件为准)</div></div></div></div>

</body></html>
